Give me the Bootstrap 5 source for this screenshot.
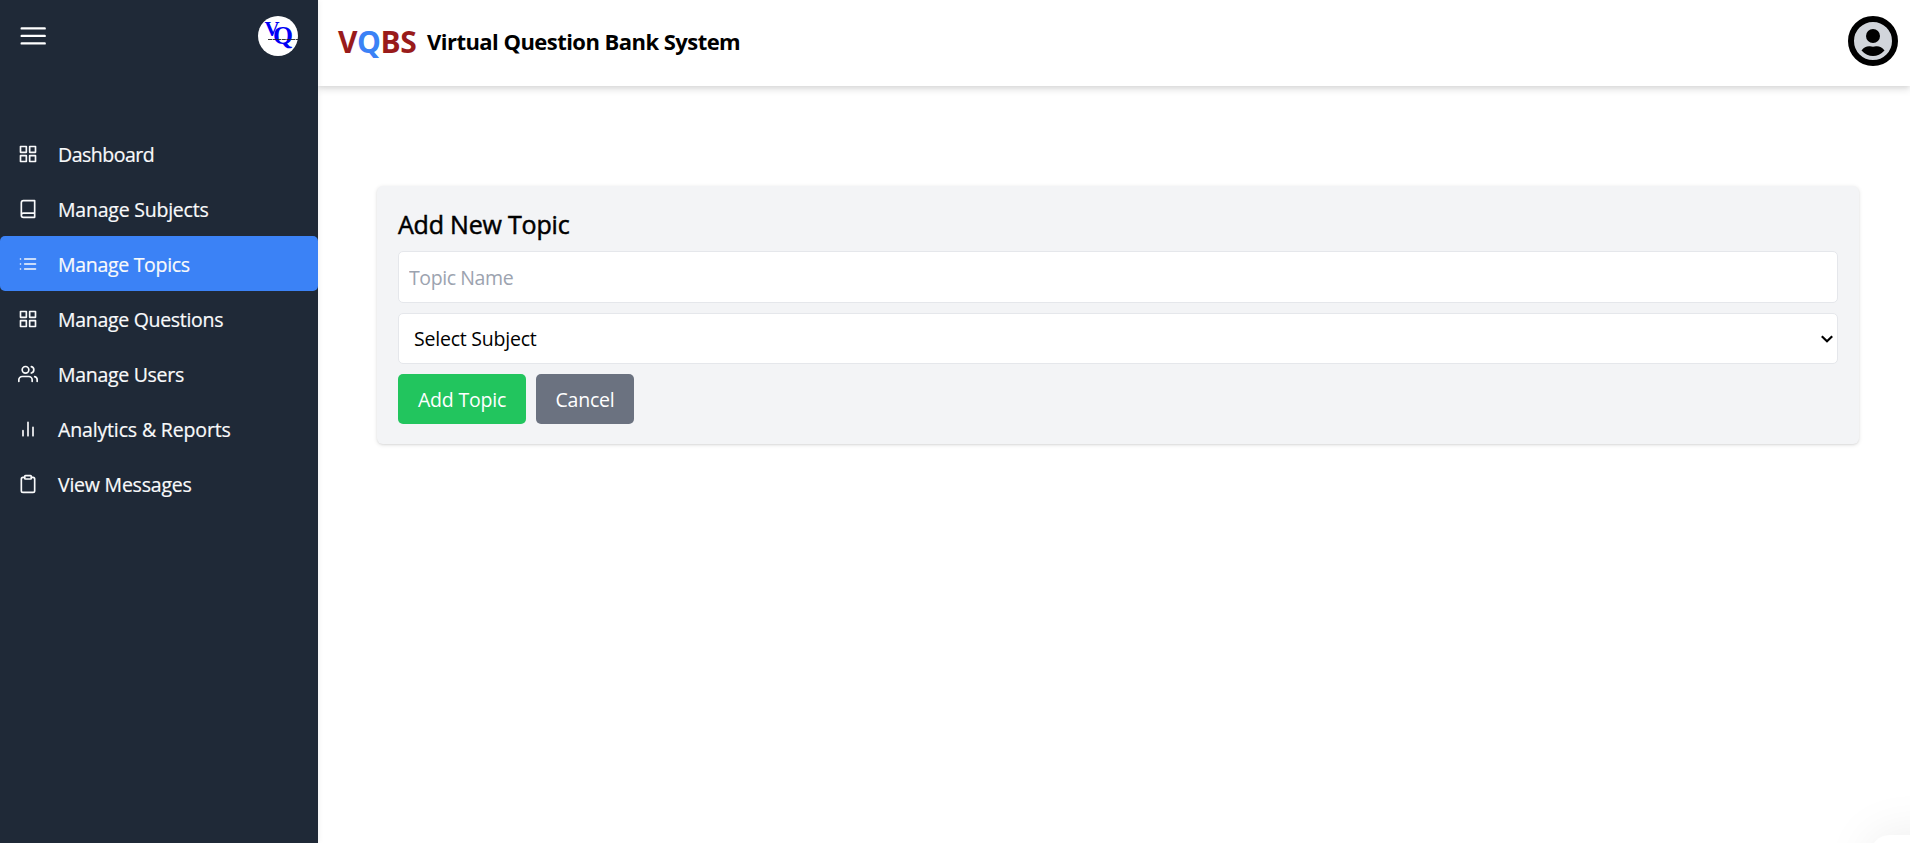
<!DOCTYPE html>
<html lang="en">
<head>
<meta charset="utf-8">
<meta name="viewport" content="width=device-width, initial-scale=1">
<title>Virtual Question Bank System</title>
<link href="https://cdn.jsdelivr.net/npm/bootstrap@5.3.0/dist/css/bootstrap.min.css" rel="stylesheet">
<style>
  body { font-family: "Open Sans", "Noto Sans", sans-serif; font-size: 19.5px; letter-spacing: -.22px; line-height: 30px; color: #000; background: #fff; }
  .sidebar { width: 318px; background: #1f2937; color: #f9fafb; box-shadow: 0 0 6px rgba(0,0,0,.08); z-index: 2; }
  .sidebar-top { height: 126px; padding: 16px 20px 0 19px; }
  .logo-disc { width: 40px; height: 40px; }
  .menu-link { height: 55px; padding: 0 18px; gap: 20px; border-radius: 5px; color: #f9fafb; text-decoration: none; -webkit-text-stroke: .2px currentColor; }
  .menu-link.active { background: #3b82f6; }
  .menu-link span { padding-top: 2px; }
  .menu-link .tight { letter-spacing: -.5px; }
  .menu-link .snug { letter-spacing: -.3px; }
  .stroke-icon { width: 20px; height: 20px; fill: none; stroke: currentColor; stroke-width: 2; stroke-linecap: round; stroke-linejoin: round; flex: none; }
  .topbar { height: 86px; padding: 16px 12px 20px 20px; box-shadow: 0 4px 7px rgba(0,0,0,.1), 0 2px 4px rgba(0,0,0,.06); background: #fff; }
  .brand { font-size: 30px; font-weight: 700; letter-spacing: -.4px; color: #991b1b; width: 89px; padding-top: 2px; }
  .brand span { color: #3b82f6; }
  .brand-name { font-size: 22px; font-weight: 700; letter-spacing: -.54px; }
  .panel { margin: 100px 51px 0 59px; padding: 20px 21px 20px 21px; height: 258px; background: #f3f4f6; border-radius: 6px; box-shadow: 0 1px 4px rgba(0,0,0,.12), 0 1px 2px rgba(0,0,0,.06); }
  .panel-title { font-size: 25px; font-weight: 500; letter-spacing: -.2px; line-height: 35px; margin: 1px 0 9px; -webkit-text-stroke: .5px #000; }
  .field { border: 1px solid #e5e7eb; border-radius: 5px; background-color: #fff; width: 100%; display: block; color: #000; outline: 0; letter-spacing: inherit; }
  input.field { height: 52px; padding: 0 10px; letter-spacing: -.4px; margin-bottom: 10px; }
  input.field::placeholder { color: #9ca3af; opacity: 1; }
  select.field { height: 51px; padding: 1px 24px 0 15px; margin-bottom: 10px; appearance: none; background: #fff url("data:image/svg+xml,%3Csvg xmlns='http://www.w3.org/2000/svg' width='14' height='10' viewBox='0 0 14 10' fill='none' stroke='%23000' stroke-width='2.2'%3E%3Cpath d='M1.8 2.200 7 7.300 12.200 2.200'/%3E%3C/svg%3E") no-repeat right 3px center; }
  .btn-form { height: 50px; padding: 1px 0 0; border: 0; border-radius: 5px; color: #fff; font-size: inherit; line-height: 30px; letter-spacing: -.2px; }
  .btn-add { background: #22c55e; width: 128px; }
  .btn-cancel { background: #6b7280; width: 98px; }
  .btn-form:hover { color: #fff; }
  .corner-tab { right: -50px; bottom: -92px; width: 90px; height: 100px; border-radius: 20px; background: #fff; box-shadow: 0 0 50px rgba(0,0,0,.08); }
</style>
</head>
<body class="d-flex vh-100 overflow-hidden">
<aside class="sidebar d-flex flex-column flex-shrink-0 position-relative">
  <div class="sidebar-top d-flex justify-content-between align-items-start">
    <svg width="28" height="40" viewBox="0 0 28 40" stroke="#fff" stroke-width="2.4" stroke-linecap="round"><path d="M2.7 12.4h23M2.7 19.9h23M2.7 27.4h23"/></svg>
    <svg class="logo-disc" viewBox="0 0 40 40">
      <circle cx="20" cy="20" r="20" fill="#fff"/>
      <g fill="#0000f5" font-family="Liberation Serif, serif" font-weight="700" letter-spacing="0">
        <text x="6.500" y="19.500" font-size="22" textLength="15" lengthAdjust="spacingAndGlyphs">V</text>
        <text x="15" y="28" font-size="25" textLength="20" lengthAdjust="spacingAndGlyphs">Q</text>
      </g>
      <path d="M10 23.500h30" stroke="#222" stroke-width=".9" stroke-dasharray="4 .6"/>
    </svg>
  </div>
  <nav class="d-flex flex-column">
    <a class="menu-link d-flex align-items-center" href="#"><svg class="stroke-icon" viewBox="0 0 24 24"><path d="M3 3h7v7H3zM14 3h7v7h-7zM14 14h7v7h-7zM3 14h7v7H3z"/></svg><span class="tight">Dashboard</span></a>
    <a class="menu-link d-flex align-items-center" href="#"><svg class="stroke-icon" viewBox="0 0 24 24"><path d="M4 19.500A2.500 2.500 0 0 1 6.500 17H20M6.500 2H20v20H6.500A2.500 2.500 0 0 1 4 19.500v-15A2.500 2.500 0 0 1 6.500 2z"/></svg><span>Manage Subjects</span></a>
    <a class="menu-link active d-flex align-items-center" href="#"><svg class="stroke-icon" viewBox="0 0 24 24"><path d="M8 6h13M8 12h13M8 18h13M3 6h.01M3 12h.01M3 18h.01"/></svg><span class="snug">Manage Topics</span></a>
    <a class="menu-link d-flex align-items-center" href="#"><svg class="stroke-icon" viewBox="0 0 24 24"><path d="M3 3h7v7H3zM14 3h7v7h-7zM14 14h7v7h-7zM3 14h7v7H3z"/></svg><span class="snug">Manage Questions</span></a>
    <a class="menu-link d-flex align-items-center" href="#"><svg class="stroke-icon" viewBox="0 0 24 24"><path d="M17 21v-2a4 4 0 0 0-4-4H5a4 4 0 0 0-4 4v2M23 21v-2a4 4 0 0 0-3-3.870M16 3.130a4 4 0 0 1 0 7.750"/><circle cx="9" cy="7" r="4"/></svg><span class="snug">Manage Users</span></a>
    <a class="menu-link d-flex align-items-center" href="#"><svg class="stroke-icon" viewBox="0 0 24 24"><path d="M18 20V10M12 20V4M6 20v-6"/></svg><span style="letter-spacing:-.15px">Analytics &amp; Reports</span></a>
    <a class="menu-link d-flex align-items-center" href="#"><svg class="stroke-icon" viewBox="0 0 24 24"><path d="M16 4h2a2 2 0 0 1 2 2v14a2 2 0 0 1-2 2H6a2 2 0 0 1-2-2V6a2 2 0 0 1 2-2h2"/><rect x="8" y="2" width="8" height="4" rx="1"/></svg><span>View Messages</span></a>
  </nav>
</aside>
<div class="flex-grow-1 d-flex flex-column">
  <header class="topbar d-flex align-items-center">
    <div class="brand">V<span>Q</span>BS</div>
    <div class="brand-name">Virtual Question Bank System</div>
    <svg class="ms-auto" width="50" height="50" viewBox="0 0 50 50">
      <circle cx="25" cy="25" r="22" fill="#d1d5db" stroke="#000" stroke-width="6"/>
      <circle cx="25" cy="20" r="7"/>
      <path d="M13.500 34.500C16 31 19 30 22 30.300q3 .7 6 0c3-.3 6 .7 8.500 4.200C33 38.500 29 40 25 40s-8-1.500-11.500-5.500z"/>
    </svg>
  </header>
  <main>
    <section class="panel">
      <h2 class="panel-title">Add New Topic</h2>
      <form>
        <input class="field" type="text" placeholder="Topic Name">
        <select class="field"><option>Select Subject</option></select>
        <div class="d-flex" style="gap:10px">
          <button type="button" class="btn btn-form btn-add text-nowrap">Add Topic</button>
          <button type="button" class="btn btn-form btn-cancel">Cancel</button>
        </div>
      </form>
    </section>
  </main>
</div>
<div class="corner-tab position-fixed"></div>
<script src="https://cdn.jsdelivr.net/npm/bootstrap@5.3.0/dist/js/bootstrap.bundle.min.js"></script>
</body>
</html>
